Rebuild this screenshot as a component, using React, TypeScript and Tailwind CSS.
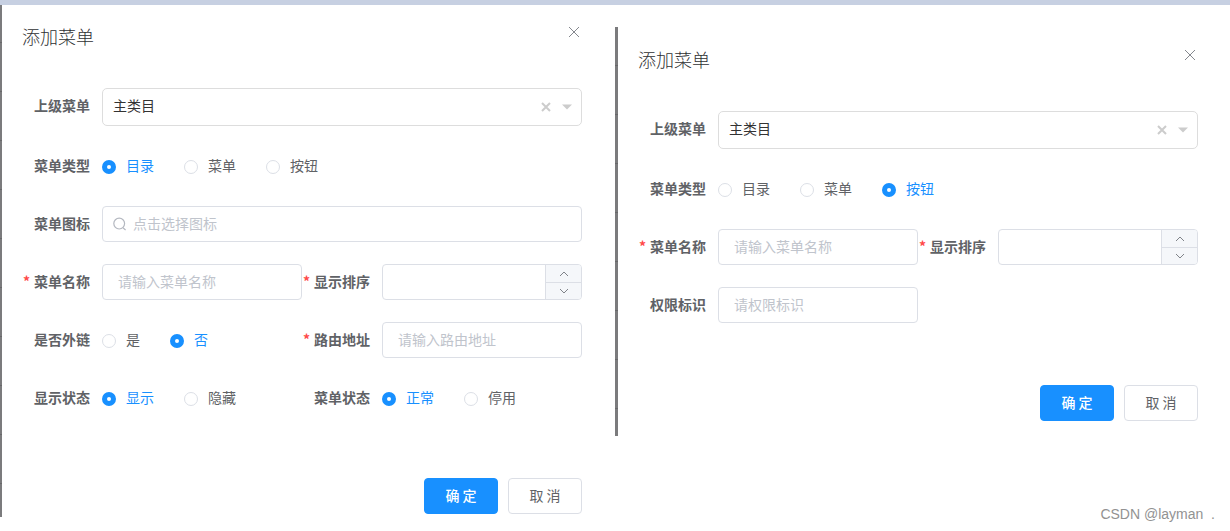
import { useId, useState } from "react";
import type { ReactNode } from "react";

function Stroke({ d, className, box = 16 }: { d: string; className: string; box?: number }) {
  return (
    <svg viewBox={`0 0 ${box} ${box}`} className={className} fill="none" stroke="currentColor" aria-hidden="true">
      <path d={d} />
    </svg>
  );
}

function Field({ label, htmlFor, required, group, children }: {
  label: string;
  htmlFor?: string;
  required?: boolean;
  group?: string;
  children: ReactNode;
}) {
  const text = (
    <>
      {required && <span className="mr-1 text-[#ff4949]">*</span>}
      {label}
    </>
  );
  const style = "w-20 shrink-0 pr-3 text-right font-bold leading-[34px] whitespace-nowrap";
  return (
    <div className="flex">
      {group ? (
        <span id={group} className={style}>{text}</span>
      ) : (
        <label htmlFor={htmlFor} className={style}>{text}</label>
      )}
      <div className="min-w-0 flex-1">{children}</div>
    </div>
  );
}

const inputStyle =
  "block h-9 w-full rounded border border-[#dcdfe6] bg-white px-[15px] pb-0.5 outline-none placeholder:text-[#c0c4cc] focus:border-[#1890ff]";

function ParentField() {
  const id = useId();
  return (
    <Field label="上级菜单" htmlFor={id}>
      <div className="relative">
        <select id={id} className="block h-[38px] w-full appearance-none rounded-[5px] border border-[#dddddd] bg-white px-[10px] pb-1 text-[#333333] outline-none">
          <option>主类目</option>
        </select>
        <div className="pointer-events-none absolute inset-y-0 right-2.5 flex items-center gap-[11px] text-[#cccccc]">
          <Stroke d="M1 1 9 9M9 1 1 9" box={10} className="size-2.5 stroke-2" />
          <svg viewBox="0 0 10 6" className="h-1.5 w-2.5" fill="currentColor" aria-hidden="true">
            <path d="M0 .5H10L5 5.5Z" />
          </svg>
        </div>
      </div>
    </Field>
  );
}

function RadioField({ label, options, initial }: { label: string; options: string[]; initial: string }) {
  const id = useId();
  const [value, setValue] = useState(initial);
  return (
    <Field label={label} group={id}>
      <div role="radiogroup" aria-labelledby={id} className="flex h-9 items-center gap-[30px] pt-0.5">
        {options.map((option) => (
          <label key={option} className="flex cursor-pointer items-center gap-2.5 whitespace-nowrap has-checked:text-[#1890ff]">
            <input
              type="radio"
              name={id}
              checked={value === option}
              onChange={() => setValue(option)}
              className="size-3.5 appearance-none rounded-full border border-[#dcdfe6] bg-white checked:border-5 checked:border-[#1890ff]"
            />
            <span className="pb-1">{option}</span>
          </label>
        ))}
      </div>
    </Field>
  );
}

function TextField({ label, placeholder, required }: { label: string; placeholder: string; required?: boolean }) {
  const id = useId();
  return (
    <Field label={label} htmlFor={id} required={required}>
      <input id={id} type="text" placeholder={placeholder} className={inputStyle} />
    </Field>
  );
}

function IconField() {
  const id = useId();
  return (
    <Field label="菜单图标" htmlFor={id}>
      <div className="flex h-9 items-center gap-1.5 rounded border border-[#dcdfe6] pl-2.5">
        <Stroke d="M10.2 11 12.6 13M11.6 6.6A5.4 5.4 0 1 1 .8 6.6 5.4 5.4 0 0 1 11.6 6.6Z" box={14} className="size-3.5 shrink-0 stroke-[1.2] text-[#b4b8c0]" />
        <input id={id} type="text" placeholder="点击选择图标" className="h-full min-w-0 flex-1 pb-0.5 outline-none placeholder:text-[#c0c4cc]" />
      </div>
    </Field>
  );
}

function OrderField() {
  const id = useId();
  const [value, setValue] = useState("");
  const step = (by: number) => setValue(String(Math.max(0, Number(value) + by)));
  const button = "flex flex-1 items-center justify-center text-[#808389]";
  return (
    <Field label="显示排序" htmlFor={id} required>
      <div className="flex h-9 overflow-hidden rounded border border-[#dcdfe6]">
        <input
          id={id}
          type="number"
          value={value}
          onChange={(event) => setValue(event.target.value)}
          className="min-w-0 flex-1 appearance-none px-[15px] outline-none [&::-webkit-inner-spin-button]:appearance-none"
        />
        <div className="flex w-9 flex-col divide-y divide-[#dcdfe6] border-l border-[#dcdfe6] bg-[#f5f7fa]">
          <button type="button" aria-label="增加" className={button} onClick={() => step(1)}>
            <Stroke d="M1 8 5 4 9 8" box={10} className="size-2.5" />
          </button>
          <button type="button" aria-label="减少" className={button} onClick={() => step(-1)}>
            <Stroke d="M1 3 5 7 9 3" box={10} className="size-2.5" />
          </button>
        </div>
      </div>
    </Field>
  );
}

function Pair({ children }: { children: ReactNode }) {
  return <div className="grid grid-cols-2">{children}</div>;
}

function MenuDialog({ children }: { children: ReactNode }) {
  const id = useId();
  return (
    <section role="dialog" aria-labelledby={id} className="min-w-0 flex-1 pt-5 pr-8 pl-5">
      <header className="flex h-6 items-start justify-between">
        <h2 id={id} className="text-lg leading-[22px] font-light text-[#303133]">添加菜单</h2>
        <button type="button" aria-label="关闭" className="text-[#85888e]">
          <Stroke d="M3 2 13 12M13 2 3 12" className="size-4" />
        </button>
      </header>
      <form className="mt-[39px]" onSubmit={(event) => event.preventDefault()}>
        <div className="flex flex-col gap-[22px]">{children}</div>
        <div className="mt-[62px] flex justify-end gap-2.5">
          <button type="submit" className="h-9 w-[74px] rounded border border-[#1890ff] bg-[#1890ff] pb-0.5 font-medium text-white">确 定</button>
          <button type="button" className="h-9 w-[74px] rounded border border-[#dcdfe6] bg-white pb-0.5">取 消</button>
        </div>
      </form>
    </section>
  );
}

export default function App() {
  return (
    <div className="relative min-h-screen border-t-5 border-[#c7d0e2] bg-white font-['Noto_Sans_CJK_SC',sans-serif] text-sm text-[#606266]">
      <main className="grid grid-cols-2 items-start">
        <div className="flex pr-px pb-[3px]">
          <div className="-mb-[3px] w-0.5 bg-[#7b7b7d] bg-[repeating-linear-gradient(to_bottom,transparent_0_37px,#68686a_37px_38px,transparent_38px_49px)]" />
          <MenuDialog>
            <ParentField />
            <RadioField label="菜单类型" options={["目录", "菜单", "按钮"]} initial="目录" />
            <IconField />
            <Pair>
              <TextField label="菜单名称" placeholder="请输入菜单名称" required />
              <OrderField />
            </Pair>
            <Pair>
              <RadioField label="是否外链" options={["是", "否"]} initial="否" />
              <TextField label="路由地址" placeholder="请输入路由地址" required />
            </Pair>
            <Pair>
              <RadioField label="显示状态" options={["显示", "隐藏"]} initial="显示" />
              <RadioField label="菜单状态" options={["正常", "停用"]} initial="正常" />
            </Pair>
          </MenuDialog>
        </div>
        <div className="mt-[23px] flex pb-[15px]">
          <div className="-mt-px -mb-[15px] w-[3px] bg-[#7b7b7d] bg-[repeating-linear-gradient(to_bottom,transparent_0_38px,#68686a_38px_39px,transparent_39px_49px)]" />
          <MenuDialog>
            <ParentField />
            <RadioField label="菜单类型" options={["目录", "菜单", "按钮"]} initial="按钮" />
            <Pair>
              <TextField label="菜单名称" placeholder="请输入菜单名称" required />
              <OrderField />
            </Pair>
            <Pair>
              <TextField label="权限标识" placeholder="请权限标识" />
            </Pair>
          </MenuDialog>
        </div>
      </main>
      <p className="absolute right-[15px] bottom-[7px] font-['Liberation_Sans',sans-serif] leading-5 whitespace-pre text-[#929292]">CSDN @layman  .</p>
    </div>
  );
}
